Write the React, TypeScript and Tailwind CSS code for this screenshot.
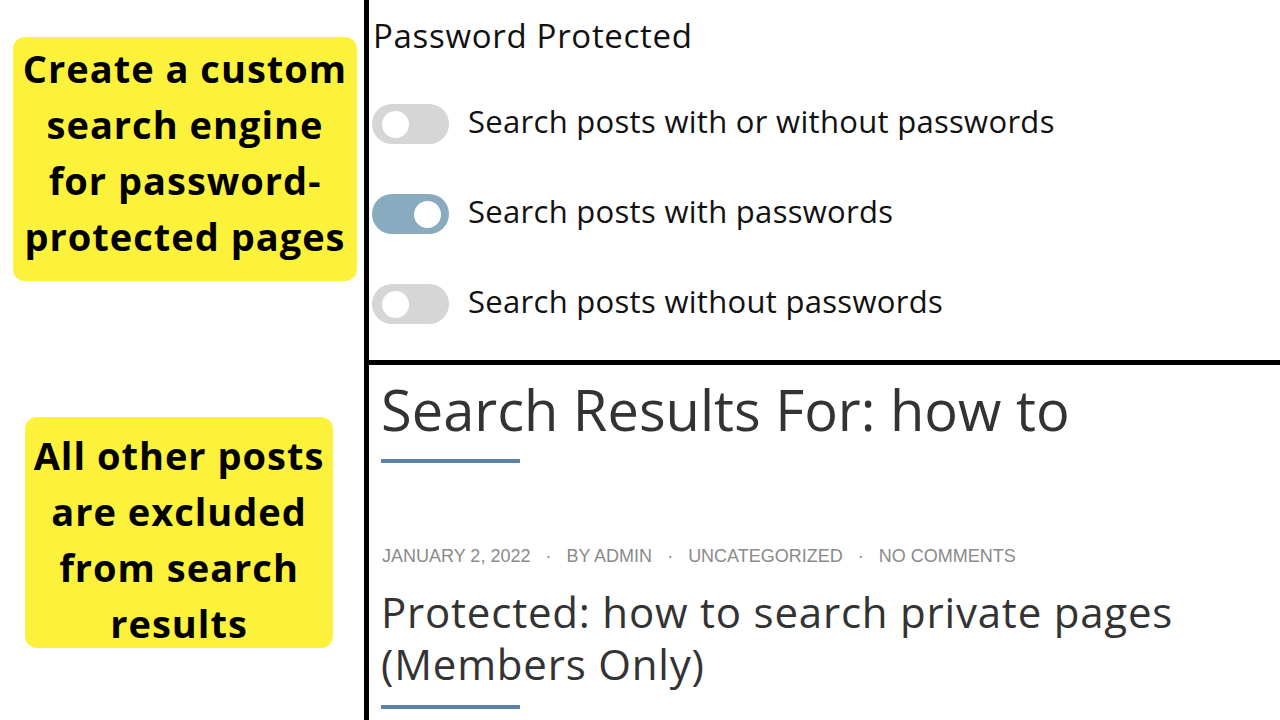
import React from "react";

function Toggle({ on }: { on: boolean }) {
  return (
    <div
      className={
        on
          ? "flex h-[40px] w-[77px] shrink-0 items-center justify-end rounded-full bg-[#8aabbf] pr-[8px]"
          : "flex h-[40px] w-[77px] shrink-0 items-center justify-start rounded-full bg-[#d6d6d6] pl-[10px]"
      }
    >
      <div className="h-[27px] w-[27px] rounded-full bg-white" />
    </div>
  );
}

function Row({ on, label }: { on: boolean; label: string }) {
  return (
    <div className="flex items-center gap-[19px]">
      <Toggle on={on} />
      <span className="pb-[6px] text-[31px] leading-none tracking-[0.3px] text-[#111]">
        {label}
      </span>
    </div>
  );
}

export default function App() {
  return (
    <div className="flex h-[720px] w-[1280px] overflow-hidden bg-white">
      {/* left column */}
      <div
        className="flex w-[364px] shrink-0 flex-col items-start"
        style={{ fontFamily: '"Open Sans", sans-serif' }}
      >
        <div className="ml-[13px] mt-[37px] h-[244px] w-[344px] rounded-[12px] bg-[#fdf23b] pt-[3px] text-center text-[38px] font-bold leading-[56px] tracking-[1px] text-black">
          Create a custom
          <br />
          search engine
          <br />
          for password-
          <br />
          protected pages
        </div>
        <div className="ml-[25px] mt-[136px] h-[231px] w-[308px] rounded-[12px] bg-[#fdf23b] pt-[10px] text-center text-[38px] font-bold leading-[56px] tracking-[1px] text-black">
          All other posts
          <br />
          are excluded
          <br />
          from search
          <br />
          results
        </div>
      </div>

      {/* vertical divider */}
      <div className="w-[5px] shrink-0 bg-black" />

      {/* right column */}
      <div className="flex flex-1 flex-col">
        <div
          className="flex h-[360px] flex-col pl-[3px]"
          style={{ fontFamily: '"Open Sans", sans-serif' }}
        >
          <div className="ml-[1px] mt-[19px] text-[33px] leading-none tracking-[0.7px] text-[#111]">
            Password Protected
          </div>
          <div className="mt-[52px] flex flex-col gap-[50px]">
            <Row on={false} label="Search posts with or without passwords" />
            <Row on={true} label="Search posts with passwords" />
            <Row on={false} label="Search posts without passwords" />
          </div>
        </div>

        <div className="h-[5px] w-full bg-black" />

        <div className="flex flex-col pl-[12px]">
          <div
            className="mt-[16px] text-[56px] leading-none text-[#333]"
            style={{ fontFamily: '"Open Sans", sans-serif' }}
          >
            Search Results For: how to
          </div>
          <div className="mt-[22px] h-[4px] w-[139px] bg-[#5a83a8]" />
          <div
            className="mt-[84px] flex items-center pl-[1px] text-[18px] leading-none text-[#8a8a8a]"
            style={{ fontFamily: '"Liberation Sans", Arial, sans-serif' }}
          >
            <span>JANUARY 2, 2022</span>
            <span className="mx-[15px]">·</span>
            <span>BY ADMIN</span>
            <span className="mx-[15px]">·</span>
            <span>UNCATEGORIZED</span>
            <span className="mx-[15px]">·</span>
            <span>NO COMMENTS</span>
          </div>
          <div
            className="mt-[21px] text-[42px] leading-[52px] tracking-[0.8px] text-[#333]"
            style={{ fontFamily: '"Open Sans", sans-serif' }}
          >
            Protected: how to search private pages
            <br />
            (Members Only)
          </div>
          <div className="mt-[15px] h-[4px] w-[139px] bg-[#5a83a8]" />
        </div>
      </div>
    </div>
  );
}
